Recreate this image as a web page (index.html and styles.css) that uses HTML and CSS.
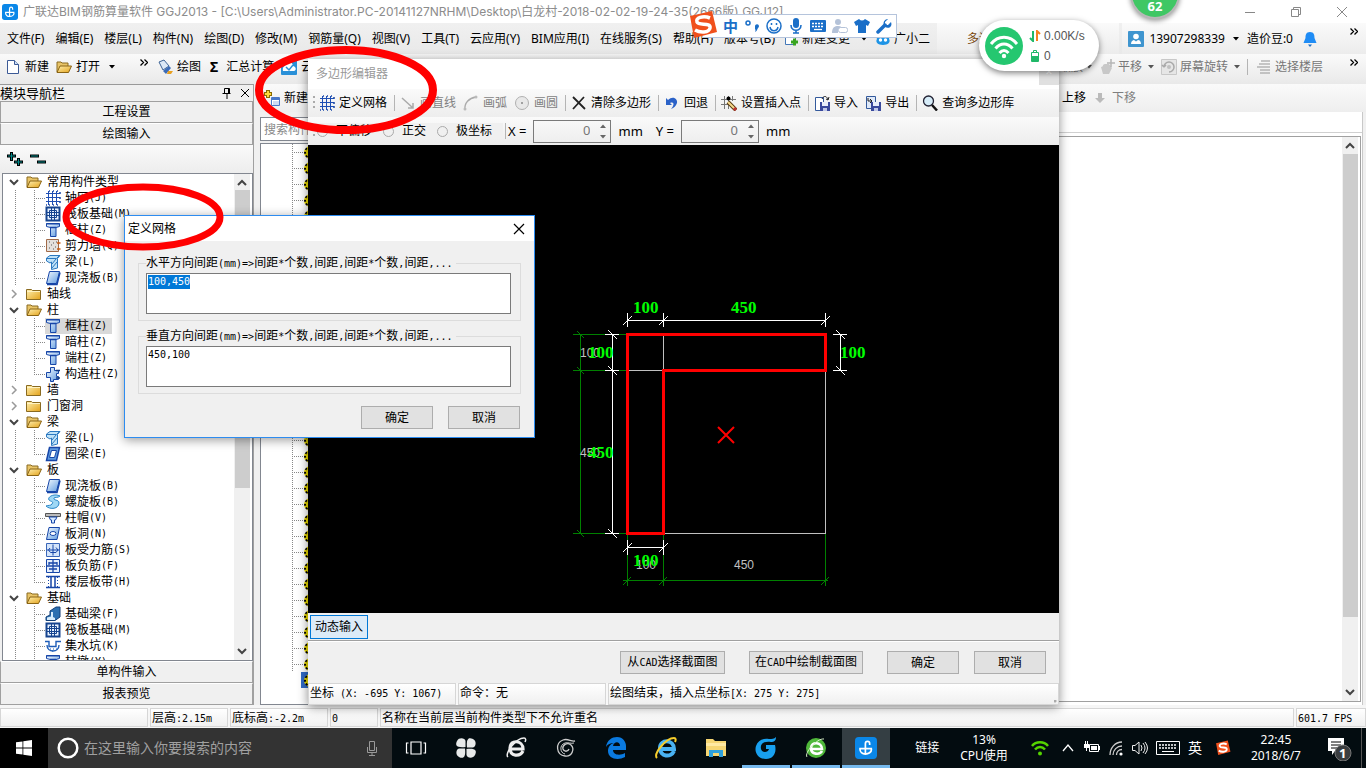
FILE: index.html
```html
<!DOCTYPE html>
<html lang="zh-CN">
<head>
<meta charset="utf-8">
<title>广联达BIM钢筋算量软件 GGJ2013</title>
<link rel="stylesheet" href="styles.css">
<script src="main.js" defer></script>
</head>
<body>
<svg class="defs" aria-hidden="true">
  <defs>
    <linearGradient id="gold" x1="0" y1="0" x2="1" y2="1"><stop offset="0" stop-color="#fff0b0"/><stop offset="1" stop-color="#e3a21a"/></linearGradient>
    <linearGradient id="blue" x1="0" y1="0" x2="1" y2="1"><stop offset="0" stop-color="#f4faff"/><stop offset="1" stop-color="#5f9be0"/></linearGradient>
    <symbol id="open" viewBox="0 0 16 14"><path d="M1 12V2h4l1 1h6v3" fill="#e8c468" stroke="#8a6a20"/><path d="M1 12.500 4 6h11.500l-3 6.500z" fill="url(#gold)" stroke="#8a6414"/></symbol>
    <symbol id="shut" viewBox="0 0 16 14"><path d="M.5 2.500h5l1 1h8v9H.5z" fill="url(#gold)" stroke="#8a6a20"/><path d="M1 4.500h13" stroke="#fff3c4"/></symbol>
    <symbol id="grid" viewBox="0 0 16 16"><path d="M3.500 1v14M7.500 1v14M11.500 1v14M1 3.500h14M1 7.500h14M1 11.500h14" stroke="#1f4fb4" fill="none"/><path d="M1 15h1m2 0h1m3 0h1m3 0h1M14 3h2M14 8h2M14 12h2M4 1h1m3 0h1m3 0h1" stroke="#1a47a8" stroke-width="1.500"/></symbol>
    <symbol id="raft" viewBox="0 0 16 16"><path d="M1.500 1.500h13v13h-13z" fill="#e8f2ff" stroke="#16448f" stroke-width="2"/><path d="M4.500 4.500h7v7h-7zM6.500 2v12M9.500 2v12M2 6.500h12M2 9.500h12" fill="none" stroke="#16448f"/></symbol>
    <symbol id="col" viewBox="0 0 16 16"><path d="M1.500 1.500h13v3l-3.500 1v9H5.500V5.500l-4-1z" fill="url(#blue)" stroke="#1746a8"/><path d="M1.500 1.800h13M5 5.500h6" stroke="#1746a8" stroke-width="1.600"/></symbol>
    <symbol id="wall" viewBox="0 0 16 16"><path d="M1.500 1.500h12v12h-12z" fill="#e4e0dc" stroke="#a06a48"/><path d="M4 4h1m3 1h1M6 7h1m3 2h1M4 10h1m3 1h1m2-7h1" stroke="#555"/><path d="M12 5h3.500M12 11h3.500" stroke="#c65a10" stroke-width="1.400"/></symbol>
    <symbol id="beam" viewBox="0 0 16 16"><path d="M1.500 4 5 1.500h10l-2.500 3v9.500L6.500 15.500V8L5 9 1.500 7z" fill="#bfe2f8" stroke="#2b78c0"/><path d="M2 4.500h9.500L14 2M7 14l5-6M7 10l4-5" fill="none" stroke="#2b78c0"/></symbol>
    <symbol id="slab" viewBox="0 0 16 16"><path d="M4.500 1.500h10l-3 12h-10z" fill="url(#blue)" stroke="#1746a8"/><path d="M2 14.500h10l3-12" fill="none" stroke="#1746a8" stroke-width="1.500"/></symbol>
    <symbol id="ring" viewBox="0 0 16 16"><path d="M4.500 1.500h10l-3 13h-10z" fill="#5f9be0" stroke="#1746a8" stroke-width="1.500"/><path d="M6.500 4.500h5l-2 7h-5z" fill="#fff" stroke="#1746a8"/></symbol>
    <symbol id="con" viewBox="0 0 16 16"><path d="M5.500 1.500h4v3h4v3h-2v3h2v3h-5v2h-3v-4h-4v-5h4z" fill="url(#blue)" stroke="#1746a8"/><path d="M11 4.500h4M11 12h4" stroke="#123a80" stroke-width="1.600"/></symbol>
    <symbol id="spiral" viewBox="0 0 16 16"><path d="M15 2C9-1 2 3 4 6c2 2 5 1 3 4-1 2-4 1-6 2 4 4 13 3 13-3 0-4-6-2-5-5 1-1 4 0 6-2z" fill="#9fd8f5" stroke="#2a86c8"/></symbol>
    <symbol id="cap" viewBox="0 0 16 16"><path d="M.5 3.500h15v3H.5z" fill="#bbb" stroke="#555"/><path d="M4 7h8l-1.500 3h-1V13H6.500v-3h-1z" fill="#d6e9ff" stroke="#1746a8"/></symbol>
    <symbol id="hole" viewBox="0 0 16 16"><path d="M4 1.500h10.500l-2.500 12H1.500z" fill="url(#blue)" stroke="#1746a8"/><ellipse cx="8" cy="7.500" rx="3" ry="2" fill="#fff" stroke="#1746a8"/></symbol>
    <symbol id="rebar" viewBox="0 0 16 16"><path d="M1.500 1.500h13v13h-13z" fill="#d5e5fa" stroke="#3a66b8"/><path d="M2 8h12M8 2.500v11M5 6 3.500 8l2 2.500H8M11 5.500l2 2.500-2 2.500H8" fill="none" stroke="#1746a8"/></symbol>
    <symbol id="neg" viewBox="0 0 16 16"><path d="M1.500 1.500h13v13h-13z" fill="#e5effc" stroke="#1746a8"/><path d="M8 2v12M4 5h8M4 11h8M2 8h12M4 4v3m8-3v3" fill="none" stroke="#1746a8" stroke-width="1.300"/></symbol>
    <symbol id="band" viewBox="0 0 16 16"><path d="M1 2.500h14M1 13.500h14M6 3v10M10 3v10" stroke="#1746a8" stroke-width="1.500"/><path d="M3.500 3v10M12.500 3v10" stroke="#1746a8" stroke-dasharray="1 2"/></symbol>
    <symbol id="fbeam" viewBox="0 0 16 16"><path d="M1 14.500V11l4-2V5l6-4h4v10l-5 3.500z" fill="#2b6fb0" stroke="#123f78"/><path d="M2 14v-2.500l4-1V6h2v5l2 1v2z" fill="#d7ecfb"/></symbol>
    <symbol id="pit" viewBox="0 0 16 16"><path d="M0 3.500h4v5h7v-5h5M2 7c0 8 12 8 12 0" fill="none" stroke="#1d5cb8" stroke-width="1.400"/><path d="M5 11h1m2 0h1m2 0h1M7 13h1" stroke="#1d5cb8"/></symbol>
    <symbol id="app" viewBox="0 0 18 18"><rect width="18" height="18" rx="3" fill="#0a87e8"/><path d="M8.500 14.500V5.500c0-2.500 3.500-2.500 3.500 0v1M3.500 9.500H14M4 9.500c0 3 2 4.500 4.500 4.500s5-1.500 5-4" fill="none" stroke="#fff" stroke-width="1.400"/></symbol>
    <symbol id="sg" viewBox="0 0 30 30"><path d="M2 6 24 1l5 21-23 6z" fill="#f0501c"/><path d="M22 8C15 5 7 8 9 12c2 4 14 0 13 6-1 5-10 5-15 2" fill="none" stroke="#fff" stroke-width="3.600"/></symbol>
    <symbol id="more" viewBox="0 0 8 7"><path d="m.5.500 3 3-3 3M4.500.500l3 3-3 3" fill="none" stroke="#000" stroke-width="1.300"/></symbol>
    <symbol id="dn" viewBox="0 0 6 4"><path d="M0 0h6L3 3.500z"/></symbol>
    <symbol id="up" viewBox="0 0 6 4"><path d="M0 4h6L3 .5z"/></symbol>
    <symbol id="chd" viewBox="0 0 10 10"><path d="m1 3 4 4 4-4" fill="none" stroke="#444" stroke-width="2"/></symbol>
    <symbol id="chr" viewBox="0 0 10 10"><path d="m3 1 4 4-4 4" fill="none" stroke="#999" stroke-width="1.500"/></symbol>
    <symbol id="chu" viewBox="0 0 10 10"><path d="m1 7 4-4 4 4" fill="none" stroke="#444" stroke-width="2"/></symbol>
  </defs>
</svg>

<div class="app">
  <header class="title">
    <svg class="i16"><use href="#app"/></svg>
    <h1>广联达BIM钢筋算量软件 GGJ2013 - [C:\Users\Administrator.PC-20141127NRHM\Desktop\白龙村-2018-02-02-19-24-35(2666版).GGJ12]</h1>
    <div class="winbtns">
      <button aria-label="最小化"><svg class="i12" viewBox="0 0 12 12"><path d="M1 6.500h10" stroke="#888"/></svg></button>
      <button aria-label="还原"><svg class="i12" viewBox="0 0 12 12"><path d="M1.500 3.500h7v7h-7zM3.500 3V1.500h7v7H9" fill="none" stroke="#888"/></svg></button>
      <button aria-label="关闭"><svg class="i12" viewBox="0 0 12 12"><path d="m1 1 10 10M11 1 1 11" stroke="#888"/></svg></button>
    </div>
  </header>

  <nav class="menu">
    <button>文件(F)</button><button>编辑(E)</button><button>楼层(L)</button><button>构件(N)</button><button>绘图(D)</button><button>修改(M)</button><button>钢筋量(Q)</button><button>视图(V)</button><button>工具(T)</button><button>云应用(Y)</button><button>BIM应用(I)</button><button>在线服务(S)</button><button>帮助(H)</button><button>版本号(B)</button>
    <button class="ico"><svg class="i16" viewBox="0 0 16 16"><path d="M2.500 1.500h10v12h-10z" fill="#fff" stroke="#4478b8"/><path d="M8 11h7M11.500 7.500v7" stroke="#38a420" stroke-width="3"/></svg>新建变更</button>
    <svg class="dn"><use href="#dn"/></svg>
    <button class="ico cloud"><svg class="i16" viewBox="0 0 16 16"><path d="M2 8c-2-4 2-6 6-6s8 2 6 6c2 3-1 6-6 6s-8-3-6-6z" fill="#1e94e6"/><circle cx="5.500" cy="9" r="1.700" fill="#fff"/><circle cx="10.500" cy="9" r="1.700" fill="#fff"/></svg>广小二</button>
    <div class="seg tip">多边形编辑</div>
    <div class="seg user">
      <svg class="i16" viewBox="0 0 16 16"><rect width="16" height="16" rx="1" fill="#3f95cf"/><circle cx="8" cy="5.500" r="2.800" fill="#fff"/><path d="M3 13c0-3 2-4 3-4l2 1.500L10 9c2 0 3 2 3 4z" fill="#fff"/></svg>
      <span>13907298339</span><svg class="dn"><use href="#dn"/></svg>
      <span class="bean">造价豆:0</span>
      <svg class="i16" viewBox="0 0 16 16"><path d="M8 1c4 0 4.500 3 4.500 6l2 5h-13l2-5c0-3 .5-6 4.500-6z" fill="#1f8cf5"/><path d="M6 13.500h4L8 16z" fill="#1f6fc5"/></svg>
    </div>
    <svg class="more"><use href="#more"/></svg>
  </nav>

  <div class="tools">
    <button class="ico"><svg class="i16" viewBox="0 0 16 16"><path d="M2.500 1.500h7l4 4v9h-11z" fill="#fff" stroke="#3c5a96"/><path d="M9.500 1.500v4h4" fill="#cfe0f5" stroke="#3c5a96"/></svg>新建</button>
    <button class="ico"><svg class="i16"><use href="#open"/></svg>打开<svg class="dn"><use href="#dn"/></svg></button>
    <svg class="more m1"><use href="#more"/></svg>
    <button class="ico"><svg class="i16" viewBox="0 0 16 16"><path d="m2 3 5-2 5 6-6 4z" fill="#dce8f6" stroke="#3e6496"/><path d="m12 7 2 2-5 6-3-3z" fill="#3c6cb8"/><path d="M11 12h5l-2 3h-4z" fill="#e8a020"/></svg>绘图</button>
    <button class="ico"><b>Σ</b>汇总计算</button>
    <button class="ico"><svg class="i16" viewBox="0 0 16 16"><rect width="16" height="16" rx="1" fill="#2a90d8"/><path d="M2 12C1 7 5 7 5 5c3-4 7-1 7 2 4 1 3 5 1 5z" fill="#fff"/><path d="m5 8 3 3 4-5" fill="none" stroke="#2a90d8" stroke-width="1.500"/></svg>云检查</button>
    <div class="zone">
      <button>缩放<svg class="dn"><use href="#dn"/></svg></button>
      <button class="ico"><svg class="i16" viewBox="0 0 16 16"><path d="M2 8c3 0 1-3 4-3h4l3 4-3 6H4z" fill="#c8c8c8"/><path d="M12 0v8M8 4h8" stroke="#b5b5b5" stroke-width="1.500"/></svg>平移<svg class="dn"><use href="#dn"/></svg></button>
      <button class="ico"><svg class="i16" viewBox="0 0 16 16"><path d="M.5.500h15v15H.5z" fill="#e6e6e6" stroke="#c8c8c8"/><path d="M3 8a5 5 0 1 1 5 5M3 8l-2-2m2 2 2-2" fill="none" stroke="#aaa" stroke-width="1.500"/><circle cx="8" cy="8" r="2" fill="#c0c0c0"/></svg>屏幕旋转<svg class="dn"><use href="#dn"/></svg></button>
      <i class="sep"></i>
      <button class="ico"><svg class="i16" viewBox="0 0 16 16"><path d="M5 2h9M3 5h11M1 8h13M4 11h10M4 14h10" fill="none" stroke="#b4b4b4" stroke-width="1.500"/></svg>选择楼层</button>
    </div>
    <svg class="more"><use href="#more"/></svg>
  </div>

  <main class="work">
    <aside class="dock">
      <div class="dockhead"><h2>模块导航栏</h2>
        <button aria-label="固定"><svg class="i12" viewBox="0 0 12 12"><path d="M3.500 1.500h5v5h-5zM1.500 6.500h8M6 7v5M7.500 2v5" fill="none" stroke="#000"/></svg></button>
        <button aria-label="关闭"><svg class="i12" viewBox="0 0 12 12"><path d="m2 2 8 8M10 2l-8 8" stroke="#000"/></svg></button></div>
      <button class="bar">工程设置</button>
      <button class="bar">绘图输入</button>
      <div class="pm">
        <button aria-label="展开"><svg class="i16" viewBox="0 0 16 16"><path d="M0 5h9M4.500 1v9M7 11h9M11.500 7v8" stroke="#000" stroke-width="3"/><path d="M1 5h7M4.500 2v7M8 11h7M11.500 8v6" stroke="#088"/></svg></button>
        <button aria-label="折叠"><svg class="i16" viewBox="0 0 16 16"><path d="M0 5h9M7 11h9" stroke="#000" stroke-width="3"/><path d="M1 5h7M8 11h7" stroke="#088"/></svg></button>
      </div>
      <div class="tree">
        <ul>
          <li class="r"><svg class="ch"><use href="#chd"/></svg><svg class="i16"><use href="#open"/></svg>常用构件类型</li>
          <li class="c"><svg class="i16"><use href="#grid"/></svg>轴网<s>(J)</s></li>
          <li class="c"><svg class="i16"><use href="#raft"/></svg>筏板基础<s>(M)</s></li>
          <li class="c"><svg class="i16"><use href="#col"/></svg>框柱<s>(Z)</s></li>
          <li class="c"><svg class="i16"><use href="#wall"/></svg>剪力墙<s>(Q)</s></li>
          <li class="c"><svg class="i16"><use href="#beam"/></svg>梁<s>(L)</s></li>
          <li class="c end"><svg class="i16"><use href="#slab"/></svg>现浇板<s>(B)</s></li>
          <li class="r"><svg class="ch"><use href="#chr"/></svg><svg class="i16"><use href="#shut"/></svg>轴线</li>
          <li class="r"><svg class="ch"><use href="#chd"/></svg><svg class="i16"><use href="#open"/></svg>柱</li>
          <li class="c"><span class="sel"><svg class="i16"><use href="#col"/></svg>框柱<s>(Z)</s></span></li>
          <li class="c"><svg class="i16"><use href="#col"/></svg>暗柱<s>(Z)</s></li>
          <li class="c"><svg class="i16"><use href="#col"/></svg>端柱<s>(Z)</s></li>
          <li class="c end"><svg class="i16"><use href="#con"/></svg>构造柱<s>(Z)</s></li>
          <li class="r"><svg class="ch"><use href="#chr"/></svg><svg class="i16"><use href="#shut"/></svg>墙</li>
          <li class="r"><svg class="ch"><use href="#chr"/></svg><svg class="i16"><use href="#shut"/></svg>门窗洞</li>
          <li class="r"><svg class="ch"><use href="#chd"/></svg><svg class="i16"><use href="#open"/></svg>梁</li>
          <li class="c"><svg class="i16"><use href="#beam"/></svg>梁<s>(L)</s></li>
          <li class="c end"><svg class="i16"><use href="#ring"/></svg>圈梁<s>(E)</s></li>
          <li class="r"><svg class="ch"><use href="#chd"/></svg><svg class="i16"><use href="#open"/></svg>板</li>
          <li class="c"><svg class="i16"><use href="#slab"/></svg>现浇板<s>(B)</s></li>
          <li class="c"><svg class="i16"><use href="#spiral"/></svg>螺旋板<s>(B)</s></li>
          <li class="c"><svg class="i16"><use href="#cap"/></svg>柱帽<s>(V)</s></li>
          <li class="c"><svg class="i16"><use href="#hole"/></svg>板洞<s>(N)</s></li>
          <li class="c"><svg class="i16"><use href="#rebar"/></svg>板受力筋<s>(S)</s></li>
          <li class="c"><svg class="i16"><use href="#neg"/></svg>板负筋<s>(F)</s></li>
          <li class="c end"><svg class="i16"><use href="#band"/></svg>楼层板带<s>(H)</s></li>
          <li class="r"><svg class="ch"><use href="#chd"/></svg><svg class="i16"><use href="#open"/></svg>基础</li>
          <li class="c"><svg class="i16"><use href="#fbeam"/></svg>基础梁<s>(F)</s></li>
          <li class="c"><svg class="i16"><use href="#raft"/></svg>筏板基础<s>(M)</s></li>
          <li class="c"><svg class="i16"><use href="#pit"/></svg>集水坑<s>(K)</s></li>
          <li class="c"><svg class="i16"><use href="#col"/></svg>柱墩<s>(Y)</s></li>
        </ul>
        <div class="scroll"><svg><use href="#chu"/></svg><div class="thumb t1"></div><svg><use href="#chd"/></svg></div>
      </div>
      <button class="bar">单构件输入</button>
      <button class="bar">报表预览</button>
    </aside>

    <section class="view">
      <div class="tools2">
        <button class="ico"><svg class="i16" viewBox="0 0 16 16"><path d="M0 4h8M4 0v8" stroke="#8a6a00" stroke-width="4"/><path d="M1 4h6M4 1v6" stroke="#ffd83a" stroke-width="2"/><path d="M7.500 7.500h8v8h-8z" fill="#fff" stroke="#4a78c8"/><path d="M7 9h9" stroke="#4a78c8" stroke-width="2"/><path d="M9 12h6m-6 2h6" stroke="#9ab8e8"/></svg>新建</button>
        <div class="moves"><button>上移</button><button class="ico off"><svg class="i16" viewBox="0 0 16 16"><path d="M6 3h4v5h3l-5 5-5-5h3z" fill="#bbb"/></svg>下移</button></div>
      </div>
      <div class="cols">
        <div class="parts">
          <input type="text" aria-label="搜索构件" placeholder="搜索构件...">
          <ul class="nodes">
            <li></li><li></li><li></li><li></li><li></li><li></li><li></li><li></li><li></li><li></li><li></li><li></li><li></li><li></li><li></li><li></li><li></li><li></li><li></li><li></li><li></li><li></li><li></li><li></li><li></li><li></li><li></li><li></li><li></li><li></li><li></li><li></li><li></li><li class="on"></li>
          </ul>
        </div>
        <div class="props">
          <div class="props-top"></div>
          <div class="props-list"><div class="scroll"><svg><use href="#chu"/></svg><div class="thumb t2"></div><svg><use href="#chd"/></svg></div></div>
        </div>
      </div>
    </section>
  </main>

  <footer class="status">
    <span class="s1"></span><span class="s2">层高<s>:2.15m</s></span><span class="s3">底标高<s>:-2.2m</s></span><span class="s4"><s>0</s></span><span class="s5">名称在当前层当前构件类型下不允许重名</span><span class="s6"><s>601.7 FPS</s></span>
  </footer>

  <div class="taskbar">
    <button class="start" aria-label="开始"><svg class="i16" viewBox="0 0 16 16"><path d="m0 2.300 6.500-.9v6.200H0zM7.300 1.300 16 0v7.600H7.300zM0 8.400h6.500v6.200L0 13.700zM7.300 8.400H16V16l-8.700-1.300z" fill="#fff"/></svg></button>
    <label class="find"><svg class="i22" viewBox="0 0 22 22"><circle cx="11" cy="11" r="9.300" fill="none" stroke="#fff" stroke-width="2.500"/></svg>
      <input type="text" placeholder="在这里输入你要搜索的内容" aria-label="搜索">
      <svg class="i16" viewBox="0 0 16 16"><path d="M5.500 1.500h5v9h-5zM3.500 7v5.500h9V7M8 12.500V15M5 15.500h6" fill="none" stroke="#999"/></svg></label>
    <div class="apps">
      <button aria-label="任务视图"><svg class="i22" viewBox="0 0 22 22"><path d="M6 5h10v12H6zM3.500 6H1.500v10h2M18.500 6h2v10h-2" fill="none" stroke="#fff" stroke-width="1.200"/></svg></button>
      <button aria-label="应用"><svg class="i22" viewBox="0 0 22 22"><g fill="#e8eaea"><path d="M10.500 10C1 11 0 8 2 4c2-4 8-3 8.500 0z"/><path d="M12 10.500C11 1 14 0 18 2c4 2 3 8 0 8.500z"/><path d="M11.500 12c9.500-1 10.500 2 8.500 6-2 4-8 3-8.500 0z"/><path d="M10 11.500c1 9.500-2 10.500-6 8.500-4-2-3-8 0-8.500z"/></g></svg></button>
      <button aria-label="浏览器"><svg class="i22" viewBox="0 0 22 22"><path d="M18 14c-3 6-13 6-13-3s13-8 13 1H6" fill="none" stroke="#eee" stroke-width="3.200"/><path d="M3 20C-1 17 11 1 19 1c2 0 2 2 1 4" fill="none" stroke="#eee" stroke-width="1.500"/></svg></button>
      <button aria-label="浏览器"><svg class="i22" viewBox="0 0 22 22"><path d="M20 4c-4 1-7-3-12-1-8 3-7 15 2 16 7 1 10-7 6-11-4-3-9 0-8 4 1 3 5 3 6 0" fill="none" stroke="#ccc" stroke-width="1.300"/><path d="M19 6c-3 1-6-1-9 0-6 2-5 10 0 11" fill="none" stroke="#ccc"/></svg></button>
      <button aria-label="Edge"><svg class="i22" viewBox="0 0 22 22"><path d="M1 10C2 3 7 0 12 0c6 0 9 5 9 9v4H8c0 5 7 6 12 3v4c-7 4-17 2-17-6 0-4 2-7 6-8-4 0-6 1-8 4zm7-1h7c0-5-6-5-7 0z" fill="#0a7ae0"/></svg></button>
      <button aria-label="IE"><svg class="i22" viewBox="0 0 22 22"><path d="M19 14c-3 7-14 6-14-3s14-9 14 1H7" fill="none" stroke="#49b2f2" stroke-width="4"/><path d="M2 21C-2 17 11 1 19 1c2 0 2 2 1 4" fill="none" stroke="#f5cd2c" stroke-width="2"/></svg></button>
      <button aria-label="资源管理器"><svg class="i22" viewBox="0 0 22 22"><path d="M1 2h7l2 2h11v15H1z" fill="#f6d673"/><path d="M1 6h20v3H1z" fill="#ffe9a2"/><path d="M4 20v-7h14v7h-4v-4H8v4z" fill="#2ea0dc"/></svg></button>
      <button class="run" aria-label="广联达"><svg class="i22" viewBox="0 0 22 22"><path d="M21 0c0 4-2 5-5 5-8-1-11 2-10 7 1 4 7 4 8 0h-3V8h9c2 8-2 14-9 14C3 22-1 15 1 9 3 3 8 1 14 2c3 0 5 0 7-2z" fill="#18a0ef"/></svg></button>
      <button class="run" aria-label="360浏览器"><svg class="i22" viewBox="0 0 22 22"><circle cx="11" cy="11" r="10" fill="#4fb83a"/><path d="M17 14c-2 4-11 4-11-3s11-6 11 1H7" fill="none" stroke="#fff" stroke-width="2.600"/><path d="M2 20C-1 16 12 1 19 2" fill="none" stroke="#d8f0c8"/></svg></button>
      <button class="run cur" aria-label="钢筋算量"><svg class="i22"><use href="#app"/></svg></button>
    </div>
    <div class="tray">
      <span class="link">链接</span>
      <span class="two cpu">13%<br>CPU使用</span>
      <svg class="i18 hot" viewBox="0 0 18 18"><path d="M1 7c4-5 12-5 16 0M4 10.500c3-3.500 7-3.500 10 0" fill="none" stroke="#55d400" stroke-width="2.500"/><circle cx="9" cy="14.500" r="2" fill="#55d400"/></svg>
      <svg class="i12 caret" viewBox="0 0 12 12"><path d="m1 9 5-6 5 6" fill="none" stroke="#fff" stroke-width="1.300"/></svg>
      <svg class="i16" viewBox="0 0 16 16"><path d="M5.500 4.500h9v7h-9z" fill="none" stroke="#fff"/><path d="M7 6h6v4H7zM15 6h1v4h-1zM0 4h5v4H3v3H2V8H0zM1 1h1v3H1zM3 1h1v3H3z" fill="#fff"/></svg>
      <svg class="i16" viewBox="0 0 16 16"><path d="M2 15C2 8 7 2 14 2M5 15c0-5 4-9 9-9M8.500 15c0-3 2-5.500 5.500-5.500" fill="none" stroke="#ccc" stroke-width="1.300"/><circle cx="13" cy="14" r="1.600" fill="#fff"/></svg>
      <svg class="i16" viewBox="0 0 16 16"><path d="M.5 5.500H3L7 2v12l-4-3.500H.5zM9 5q2 3 0 6M11 3q4 5 0 10M13 2q5 6 0 12" fill="none" stroke="#eee"/></svg>
      <svg class="kb" viewBox="0 0 24 16"><path d="M.5 1.500h23v13H.5z" fill="none" stroke="#fff"/><path d="M3 5h18M3 8h18" stroke="#fff" stroke-width="1.500" stroke-dasharray="2 1"/><path d="M6 11.500h12" stroke="#fff"/></svg>
      <span class="ime">英</span>
      <svg class="i16"><use href="#sg"/></svg>
      <span class="two clock">22:45<br>2018/6/7</span>
      <button class="note" aria-label="通知"><svg viewBox="0 0 26 26"><path d="M2 3h16v13H9l-3 4v-4H2z" fill="#fff"/><path d="M5 7h10M5 10h10M5 13h6" stroke="#000"/><circle cx="17" cy="18" r="8" fill="#3a3d40" stroke="#777"/></svg><b>1</b></button>
    </div>
  </div>
</div>

<section class="editor">
  <header class="ed-title"><h2>多边形编辑器</h2><button aria-label="关闭">×</button></header>
  <div class="ed-tools">
    <i class="grip"></i>
    <button class="ico"><svg class="i16"><use href="#grid"/></svg>定义网格</button><i class="sep"></i>
    <button class="ico off"><svg class="i16" viewBox="0 0 16 16"><path d="m2 3 11 10M8 13h5V8" fill="none" stroke="#aaa" stroke-width="1.500"/></svg>画直线</button>
    <button class="ico off"><svg class="i16" viewBox="0 0 16 16"><path d="M2 15C1 8 6 3 13 2" fill="none" stroke="#aaa" stroke-width="1.300"/><circle cx="13" cy="2" r="1.500" fill="#bbb"/><circle cx="2" cy="14" r="1.500" fill="#bbb"/></svg>画弧</button>
    <button class="ico off"><svg class="i16" viewBox="0 0 16 16"><circle cx="8" cy="8" r="6.500" fill="#e8e8e8" stroke="#b0b0b0"/><circle cx="8" cy="8" r="1" fill="#888"/></svg>画圆</button><i class="sep"></i>
    <button class="ico"><svg class="i16" viewBox="0 0 16 16"><path d="m2 2 12 12M13 2 2 14" stroke="#222" stroke-width="1.800"/></svg>清除多边形</button><i class="sep"></i>
    <button class="ico"><svg class="i16" viewBox="0 0 16 16"><path d="M4 5c5-5 10-1 9 3-1 3-3 5-6 6 3-3 4-8-1-6l2 2H2V3z" fill="#2b62c8"/></svg>回退</button><i class="sep"></i>
    <button class="ico"><svg class="i16" viewBox="0 0 16 16"><path d="M3.500 1v13M7.500 1v13M11.500 1v5M0 4.500h15M0 9.500h8" stroke="#777"/><circle cx="7.500" cy="3.500" r="2" fill="#000"/><path d="m7 7 8 8" stroke="#5a3a10" stroke-width="4"/><path d="m7 7 7 7" stroke="#f5d88c" stroke-width="2"/><path d="m13 13 2 2" stroke="#c03030" stroke-width="3"/></svg>设置插入点</button><i class="sep"></i>
    <button class="ico"><svg class="i16" viewBox="0 0 16 16"><path d="M1.500 2.500h8v13h-8z" fill="#fff" stroke="#345a9c"/><path d="M6 7h10v9H6z" fill="#39499c"/><path d="M8 7h6v4H8z" fill="#e8eefa"/><path d="M9 13h4v3H9z" fill="#c0c8e8"/><path d="M8 4c2-4 5-3 6 1m0 0-2-1m2 1 1-3" fill="none" stroke="#222"/></svg>导入</button>
    <button class="ico"><svg class="i16" viewBox="0 0 16 16"><path d="M1.500 1.500h9v12h-9z" fill="#dfe9f8" stroke="#345a9c"/><path d="M6 7h10v9H6z" fill="#39499c"/><path d="M8 7h6v4H8z" fill="#e8eefa"/><path d="M9 13h4v3H9z" fill="#c0c8e8"/><path d="M3 3v3h4M5 4l2 2-2 2" fill="none" stroke="#222"/></svg>导出</button><i class="sep"></i>
    <button class="ico"><svg class="i16" viewBox="0 0 16 16"><circle cx="6.500" cy="6" r="5" fill="#d6ecf8" stroke="#223" stroke-width="1.300"/><path d="m10 10 5 5.500" stroke="#111" stroke-width="2.500"/></svg>查询多边形库</button>
  </div>
  <div class="ed-opts">
    <div class="radios"><i class="grip"></i>
      <label><input type="radio" name="off" disabled>不偏移</label><label><input type="radio" name="off" disabled>正交</label><label><input type="radio" name="off" disabled>极坐标</label></div>
    <i class="sep"></i>
    <label class="num">X = <span class="spin"><input type="text" value="0" disabled><span><svg><use href="#up"/></svg><svg><use href="#dn"/></svg></span></span> mm</label>
    <label class="num">Y = <span class="spin"><input type="text" value="0" disabled><span><svg><use href="#up"/></svg><svg><use href="#dn"/></svg></span></span> mm</label>
  </div>
  <div class="canvas">
    <svg viewBox="308 145 751 468" preserveAspectRatio="xMidYMid slice" shape-rendering="crispEdges">
      <g fill="none" stroke="#008000">
        <path d="M573 334.500h55M573 370.500h55M573 533.500h55M580.500 334v200M627.500 534v52M663.500 534v52M825.500 534v52M623 580.500h205"/>
        <path d="m577 331 7 7M577 367l7 7M577 530l7 7M623 585l8-8M659 585l8-8M821 585l8-8"/>
      </g>
      <g fill="#c0c0c0" class="cad"><text x="580" y="357">100</text><text x="580" y="457">450</text><text x="636" y="569">100</text><text x="734" y="569">450</text></g>
      <path d="M663.500 334v199M627 370.500h198M825.500 334v199M627 533.500h199" stroke="#c0c0c0" fill="none"/>
      <g fill="none" stroke="#fff">
        <path d="M627 320.500h199M627.500 313v14M663.500 313v14M825.500 313v14M612.500 334v200M605 334.500h14M605 370.500h14M605 533.500h14M840.500 334v37M833 334.500h14M833 370.500h14M627 547.500h37M627.500 540v15M663.500 540v15"/>
        <path d="m623 325 9-9M659 325l9-9M821 325l9-9M608 330l9 9M608 366l9 9M608 529l9 9M836 330l9 9M836 366l9 9M623 552l9-9M659 552l9-9"/>
      </g>
      <path d="M627.500 334.500h198v36h-162v163h-36z" fill="none" stroke="#f00" stroke-width="3"/>
      <path d="m718 427 16 16M734 427l-16 16" stroke="#f00" stroke-width="2" shape-rendering="auto"/>
      <g fill="#0f0" class="dim"><text x="633" y="313">100</text><text x="731" y="313">450</text><text x="588" y="358">100</text><text x="588" y="458">450</text><text x="840" y="358">100</text><text x="633" y="566">100</text></g>
    </svg>
  </div>
  <div class="dyn"><button>动态输入</button></div>
  <div class="ed-btns"><button class="btn w">从<s>CAD</s>选择截面图</button><button class="btn w">在<s>CAD</s>中绘制截面图</button><button class="btn">确定</button><button class="btn">取消</button></div>
  <div class="ed-status"><span>坐标<s> (X: -695 Y: 1067)</s></span><span>命令：无</span><span>绘图结束，插入点坐标<s>[X: 275 Y: 275]</s></span></div>
</section>

<form class="dialog" role="dialog" aria-label="定义网格">
  <header><h2>定义网格</h2><button type="button" aria-label="关闭"><svg class="i12" viewBox="0 0 12 12"><path d="m1 1 10 10M11 1 1 11" stroke="#000" stroke-width="1.200"/></svg></button></header>
  <div class="dlg-body">
    <fieldset><legend><label for="hx">水平方向间距<s>(mm)=&gt;</s>间距<s>*</s>个数<s>,</s>间距<s>,</s>间距<s>*</s>个数<s>,</s>间距<s>,...</s></label></legend><textarea id="hx">100,450</textarea></fieldset>
    <fieldset><legend><label for="vy">垂直方向间距<s>(mm)=&gt;</s>间距<s>*</s>个数<s>,</s>间距<s>,</s>间距<s>*</s>个数<s>,</s>间距<s>,...</s></label></legend><textarea id="vy">450,100</textarea></fieldset>
    <div class="dlg-btns"><button type="button" class="btn">确定</button><button type="button" class="btn">取消</button></div>
  </div>
</form>

<svg class="mark mark-a" viewBox="0 0 184 90"><ellipse cx="92" cy="45" rx="87" ry="40"/></svg>
<svg class="mark mark-b" viewBox="0 0 162 68"><ellipse cx="81" cy="34" rx="77" ry="30"/></svg>

<div class="ime-bar">
  <svg class="sg"><use href="#sg"/></svg>
  <b>中</b>
  <svg class="i16" viewBox="0 0 16 16"><circle cx="4" cy="5" r="2" fill="none" stroke="#1b6fc8" stroke-width="1.500"/><path d="M11 8a2 2 0 1 1 3 2q-1 3-3 4 1-2 0-3z" fill="#1b6fc8"/></svg>
  <svg class="i16" viewBox="0 0 16 16"><circle cx="8" cy="8" r="7" fill="none" stroke="#1b6fc8" stroke-width="1.500"/><path d="M4 9c1 5 7 5 8 0M5.500 5v2M10.500 5v2" fill="none" stroke="#1b6fc8" stroke-width="1.500"/></svg>
  <svg class="i16" viewBox="0 0 16 16"><rect x="5" y="0" width="6" height="10" rx="3" fill="#1b6fc8"/><path d="M3 7c0 7 10 7 10 0M8 12v3M5 15h6" fill="none" stroke="#1b6fc8" stroke-width="1.600"/></svg>
  <svg class="i16" viewBox="0 0 16 16"><rect y="2" width="16" height="12" rx="1" fill="#1b6fc8"/><path d="M2 5.500h12M2 8.500h12" stroke="#fff" stroke-width="1.500" stroke-dasharray="2 1"/><path d="M4 11.500h8" stroke="#fff" stroke-width="1.300"/></svg>
  <svg class="i16" viewBox="0 0 16 16"><circle cx="6" cy="4" r="3" fill="#b4c2d8"/><path d="M0 15c0-6 3-7 6-7s5 2 5 3H6v4z" fill="#b4c2d8"/><rect x="6.500" y="9.500" width="9" height="5" rx="2" fill="#fff" stroke="#b4c2d8"/></svg>
  <svg class="i16" viewBox="0 0 16 16"><path d="M5 1q3 3 6 0l5 3-2 4-2-1v8H4V7L2 8 0 4z" fill="#1b6fc8"/></svg>
  <svg class="i16" viewBox="0 0 16 16"><path d="M2 14 9 7" stroke="#1b6fc8" stroke-width="3.500" stroke-linecap="round"/><path d="M12 1 9 4v3h3l3-3c2 5-3 7-6 5-3-3-1-8 3-8z" fill="#1b6fc8"/></svg>
</div>

<div class="net">
  <svg class="wifi" viewBox="0 0 38 38"><circle cx="19" cy="19" r="19" fill="#25c770"/><path d="M6 17c7-9 19-9 26 0M10.500 21.500c5-6 12-6 17 0M14.500 26c3-3.500 6-3.500 9 0" fill="none" stroke="#fff" stroke-width="3"/><circle cx="19" cy="29" r="2.200" fill="#fff"/></svg>
  <div class="rates">
    <span><svg class="i12" viewBox="0 0 12 12"><path d="M4 1v10L1 8" fill="none" stroke="#1fb868" stroke-width="2"/><path d="M8 11V1l3 3" fill="none" stroke="#f58220" stroke-width="2"/></svg>0.00K/s</span>
    <span><svg class="i12" viewBox="0 0 12 12"><path d="M2.500 2.500h7v9h-7zM4.500.500h3v2h-3z" fill="#fff" stroke="#1fb868"/><path d="M3 6h6v5H3z" fill="#1fb868"/></svg>0</span>
  </div>
</div>
<div class="ball">62</div>
</body>
</html>
```
FILE: styles.css
```css
* { box-sizing: border-box; }
html, body { height: 100%; }
body {
  margin: 0;
  overflow: hidden;
  position: relative;
  font: 12px/16px "Noto Sans", "Noto Sans CJK SC", sans-serif;
  color: #000;
  background: #f0f0f0;
}
button, input, textarea { font: inherit; color: inherit; }
button { border: 0; padding: 0; background: none; white-space: nowrap; }
h1, h2 { margin: 0; font-size: 12px; font-weight: 400; white-space: nowrap; }
ul { list-style: none; margin: 0; padding: 0; }
s { font: 10px/16px "DejaVu Sans Mono", monospace; text-decoration: none; white-space: pre; }
svg { flex: none; display: block; }
.defs { position: absolute; width: 0; height: 0; }
.i12 { width: 12px; height: 12px; }
.i16 { width: 16px; height: 16px; }
.i18 { width: 18px; height: 18px; }
.i22 { width: 22px; height: 22px; }
.dn { width: 6px; height: 4px; margin: 0 5px; }
.more { width: 8px; height: 7px; }
.ico { display: flex; align-items: center; gap: 5px; }
.off { color: #7f7f7f; }
.sep { flex: none; width: 1px; height: 16px; background: #b4b4b4; }
.grip { flex: none; width: 2px; height: 14px; background: repeating-linear-gradient(#aaa 0 2px, transparent 2px 5px); }

.app { height: 100%; display: flex; flex-direction: column; }
.title { height: 23px; flex: none; display: flex; align-items: center; gap: 5px; padding: 0 18px 0 2px; background: #fff; color: #8c8c8c; }
.title h1 { font-family: Inter, "Noto Sans CJK SC", sans-serif; }
.winbtns { margin-left: auto; display: flex; gap: 34px; }

.menu { height: 31px; flex: none; display: flex; align-items: center; gap: 11px; padding-left: 7px; background: linear-gradient(#f0f0f0, #e9e9e9); position: relative; }
.menu .ico { margin-left: -3px; }
.menu .ico .i16 { margin-right: -2px; }
.menu .dn { margin: 0; }
.seg { height: 31px; display: flex; align-items: center; background: linear-gradient(#fafafa, #ececec); }
.tip { flex: 1; margin-left: -4px; padding-left: 30px; color: #7a4a10; white-space: nowrap; overflow: hidden; }
.user { margin-left: -8px; padding-left: 6px; padding-right: 48px; gap: 5px; }
.menu .user .dn { margin: 0 3px; }
.user .bean { margin-right: 4px; }
.menu > .more { position: absolute; right: 8px; top: 5px; }

.tools { height: 30px; flex: none; display: flex; align-items: center; gap: 7px; padding: 0 8px 4px 5px; background: linear-gradient(#fafafa, #e9e9e9); }
.tools .ico { gap: 4px; }
.tools .m1 { margin: 0 2px 10px 13px; }
.tools > .more:last-child { margin-bottom: 10px; }
.tools b { font-size: 14px; margin: 0 4px 0 2px; }
.zone { margin-left: auto; margin-right: 20px; display: flex; align-items: center; gap: 4px; color: #777; }
.zone button { display: flex; align-items: center; }
.zone .ico { gap: 3px; }
.zone .dn { margin: 0 3px; fill: #555; }
.zone .sep { margin-right: 4px; }

.work { flex: 1; min-height: 0; display: flex; gap: 6px; }
.dock { width: 254px; flex: none; display: flex; flex-direction: column; border-right: 1px solid #a0a0a0; }
.dockhead { height: 17px; flex: none; display: flex; align-items: center; gap: 6px; padding-right: 2px; border-top: 1px solid #999; }
.dockhead h2 { margin-right: auto; font-size: 13px; line-height: 15px; }
.bar { height: 22px; flex: none; background: #f0f0f0; border: 1px solid #a0a0a0; border-top-color: #fff; line-height: 20px; }
.dockhead + .bar { border-top-color: #a0a0a0; }
.pm { height: 28px; flex: none; display: flex; align-items: center; gap: 7px; padding-left: 7px; background: linear-gradient(#fafafa, #ededed); }
.tree { flex: 1; min-height: 0; display: flex; margin-left: 2px; border: 1px solid #828790; background: #fff; overflow: hidden; }
.tree ul { flex: 1; }
.tree li { height: 16px; display: flex; align-items: center; white-space: nowrap; }
.tree .r { padding-left: 6px; gap: 5px; }
.ch { width: 10px; height: 10px; margin-right: 2px; }
.tree .c {
  padding-left: 42px; gap: 4px;
  background:
    repeating-linear-gradient(#888 0 1px, transparent 1px 2px) 12px 0 / 1px 100% no-repeat,
    repeating-linear-gradient(#888 0 1px, transparent 1px 2px) 31px 0 / 1px 100% no-repeat,
    repeating-linear-gradient(90deg, #888 0 1px, transparent 1px 2px) 31px 8px / 11px 1px no-repeat;
}
.tree .end { background-size: 1px 100%, 1px 8px, 11px 1px; }
.tree s { margin-left: -4px; }
.sel { display: flex; gap: 4px; background: #d9d9d9; padding-right: 5px; }
.scroll { width: 16px; flex: none; display: flex; flex-direction: column; align-items: center; padding: 3px 0; background: #f0f0f0; }
.tree .scroll { margin-right: 2px; }
.scroll svg { width: 10px; height: 12px; }
.scroll svg:last-child { margin-top: auto; }
.thumb { width: 15px; background: #cdcdcd; }
.t1 { height: 62%; margin-top: 1px; }
.t2 { height: 83%; margin-top: 2px; }

.view { flex: 1; min-width: 0; display: flex; flex-direction: column; }
.tools2 { height: 28px; flex: none; display: flex; align-items: center; padding-left: 4px; background: linear-gradient(#fafafa, #eee); }
.tools2 .ico { gap: 4px; }
.moves { margin-left: auto; margin-right: 230px; display: flex; gap: 6px; }
.cols { flex: 1; min-height: 0; display: flex; }
.parts { flex: 1; display: flex; flex-direction: column; gap: 2px; padding-top: 5px; }
.parts input { height: 24px; border: 1px solid #828790; background: #fff; padding: 0 3px; }
.parts input::placeholder { color: #888; opacity: 1; }
.nodes { flex: 1; min-height: 0; overflow: hidden; background: #fff; border: 1px solid #828790; }
.nodes li {
  height: 16px; display: flex; align-items: center; padding-left: 43px;
  background:
    repeating-linear-gradient(#888 0 1px, transparent 1px 2px) 31px 0 / 1px 100% no-repeat,
    repeating-linear-gradient(90deg, #888 0 1px, transparent 1px 2px) 31px 8px / 11px 1px no-repeat;
}
.nodes li::before { content: ""; width: 9px; height: 9px; border: 2px dotted #000; border-radius: 50%; background: #f0e000; }
.nodes .on { background: linear-gradient(#316ac5, #316ac5) 40px 0 / 200px 16px no-repeat; }
.props { width: 310px; flex: none; display: flex; flex-direction: column; gap: 3px; margin-right: 3px; background: #fff; border-right: 1px solid #c8c8c8; padding-bottom: 3px; }
.props-top { height: 21px; flex: none; border-bottom: 1px solid #d0d0d0; }
.props-list { flex: 1; display: flex; justify-content: flex-end; margin-right: 1px; border: 1px solid #a0a0a0; padding-right: 2px; }

.status { height: 23px; flex: none; display: flex; gap: 2px; padding: 3px 0 1px; background: #f6f6f6; }
.status span, .ed-status span { border: 1px solid #d6d6d6; padding: 0 1px; line-height: 18px; white-space: nowrap; background: linear-gradient(#fff, #f0f0f0); }
.s1 { width: 148px; } .s2 { width: 78px; } .s3 { width: 98px; } .s4 { width: 48px; } .s5 { flex: 1; } .s6 { width: 70px; }

.taskbar { height: 40px; flex: none; display: flex; background: #030c10; color: #fff; }
.start { width: 48px; display: grid; place-items: center; background: #000; }
.find { width: 344px; display: flex; align-items: center; gap: 5px; padding: 0 12px 0 9px; background: #333; }
.find input { flex: 1; min-width: 0; border: 0; padding: 0; background: none; color: #fff; font-size: 14px; }
.find input::placeholder { color: #a0a0a0; opacity: 1; }
.apps { display: flex; gap: 2px; }
.apps button { width: 48px; height: 40px; display: grid; place-items: center; border-bottom: 3px solid transparent; border-top: 3px solid transparent; }
.apps .run { border-bottom-color: #76b9ed; }
.apps .cur { background: #343e43; }
.tray { margin-left: auto; display: flex; align-items: center; gap: 8px; padding-right: 4px; }
.tray .link { margin-right: 13px; }
.two { text-align: center; }
.cpu { margin-right: 15px; }
.hot { margin-right: 5px; }
.caret { margin-right: 2px; }
.kb { width: 24px; height: 16px; }
.ime { font-size: 14px; margin-right: 5px; }
.clock { margin-left: 12px; margin-right: 11px; }
.note { width: 42px; height: 40px; border-right: 1px solid #555; position: relative; }
.note svg { width: 26px; height: 26px; margin-left: 6px; }
.note b { position: absolute; left: 19px; top: 17px; font-size: 13px; color: #fff; }

.editor { position: absolute; left: 308px; right: 307px; top: 59px; bottom: 63px; display: flex; flex-direction: column; background: #f0f0f0; box-shadow: 0 2px 10px rgba(0, 0, 0, .45); }
.ed-title { height: 30px; flex: none; display: flex; justify-content: space-between; padding-left: 8px; background: #fff; color: #999; }
.ed-title h2 { line-height: 30px; }
.ed-title button { width: 20px; height: 26px; background: #e0e0e0; color: #fff; }
.ed-tools { height: 28px; flex: none; display: flex; align-items: center; gap: 7px; padding: 0 5px; background: linear-gradient(#fafafa, #ededed); }
.ed-tools .ico { gap: 4px; }
.ed-tools .grip { margin-right: -3px; }
.ed-tools .sep { margin-right: -2px; }
.ed-opts { height: 28px; flex: none; display: flex; align-items: center; gap: 2px; background: linear-gradient(#fafafa, #ededed); }
.radios { display: flex; align-items: center; gap: 11px; padding: 0 11px 0 5px; background: #f0f0f0; }
.radios label { display: flex; align-items: center; gap: 8px; }
.radios input { appearance: none; width: 11px; height: 11px; margin: 0; border: 1px solid #aaa; border-radius: 50%; }
.radios .grip { margin-right: -9px; }
.num { display: flex; align-items: center; gap: 7px; margin-right: 11px; font-size: 13px; white-space: nowrap; }
.spin { display: flex; width: 78px; height: 23px; border: 1px solid #7a7a7a; }
.spin input { flex: 1; min-width: 0; border: 0; padding: 0 6px 2px 0; text-align: right; color: #777; background: none; }
.spin span { display: flex; flex-direction: column; justify-content: space-between; padding: 3px 4px; }
.spin svg { width: 6px; height: 4px; fill: #666; }
.canvas { flex: 1; min-height: 0; background: #000; overflow: hidden; }
.canvas svg { width: 100%; height: 100%; }
.cad { font: 12px "Liberation Sans", sans-serif; }
.dim { font: bold 17px "Liberation Serif", serif; }
.dyn { height: 28px; flex: none; padding: 2px; border-bottom: 1px solid #a0a0a0; }
.dyn button { height: 24px; width: 58px; border: 1px solid #0078d7; background: #dcebf8; }
.ed-btns { height: 42px; flex: none; display: flex; justify-content: flex-end; align-items: center; gap: 15px; padding-right: 13px; border-top: 1px solid #fff; }
.btn { width: 72px; height: 23px; border: 1px solid #adadad; background: #e1e1e1; }
.btn.w { width: auto; min-width: 105px; padding: 0 5px; margin-right: 9px; }
.ed-status { height: 22px; flex: none; display: grid; grid-template-columns: 148px 148px 1fr; gap: 2px; background: #f8f8f8; }
.ed-status span:last-child {
  background: radial-gradient(circle at 1px 1px, #aaa 1px, transparent 2px) right 0 bottom 0 / 4px 4px no-repeat, linear-gradient(#fff, #f0f0f0);
}

.dialog { position: absolute; left: 124px; top: 215px; width: 411px; border: 1px solid #2d8cf0; background: #f0f0f0; box-shadow: 0 2px 10px rgba(0, 0, 0, .4); }
.dialog header { height: 25px; display: flex; align-items: center; justify-content: space-between; padding: 0 9px 0 3px; background: #fff; }
.dlg-body { padding: 14px 13px 8px; }
.dialog fieldset { margin: 0 0 7px; padding: 2px 9px 6px 7px; border: 1px solid #dcdcdc; min-width: 0; }
.dialog legend { padding: 0 4px 0 0; height: 16px; white-space: nowrap; }
.dialog textarea { display: block; width: 100%; height: 41px; resize: none; outline: 0; border: 1px solid #7a7a7a; padding: 1px; background: #fff; font: 10px/14px "DejaVu Sans Mono", monospace; border-radius: 0; }
.dialog textarea::selection { background: #0078d7; color: #fff; }
.dlg-btns { display: flex; justify-content: flex-end; gap: 15px; margin-top: 12px; padding-right: 1px; }

.mark { position: absolute; fill: none; stroke: #f00; stroke-width: 8; pointer-events: none; }
.mark-a { left: 254px; top: 45px; width: 184px; height: 90px; }
.mark-b { left: 62px; top: 183px; width: 162px; height: 68px; stroke-width: 7; }

.ime-bar { position: absolute; left: 702px; top: 14px; height: 24px; display: flex; align-items: center; gap: 6px; padding-left: 20px; padding-right: 4px; border: 1px solid #b5c4dc; background: #fff; color: #1b6fc8; }
.ime-bar b { font-size: 15px; }
.ime-bar .sg { position: absolute; left: -15px; top: -5px; width: 30px; height: 30px; }

.net { position: absolute; right: 267px; top: 20px; width: 120px; height: 51px; display: flex; align-items: center; gap: 6px; padding-left: 6px; border-radius: 26px; background: #fff; box-shadow: 0 2px 6px rgba(0, 0, 0, .5); color: #555; }
.wifi { width: 38px; height: 38px; }
.rates { display: flex; flex-direction: column; gap: 4px; font-family: "Liberation Sans", sans-serif; }
.rates span { display: flex; align-items: center; gap: 3px; }
.ball { position: absolute; right: 186px; top: -31px; width: 50px; height: 50px; padding-top: 27px; text-align: center; border-radius: 50%; background: #3fc764; border: 2px solid #b8b8b8; box-shadow: 0 2px 5px rgba(0, 0, 0, .4); color: #fff; font-weight: 700; font-size: 13px; }
```
FILE: main.js
```js
const first = document.getElementById('hx');
first.focus();
first.select();
```
